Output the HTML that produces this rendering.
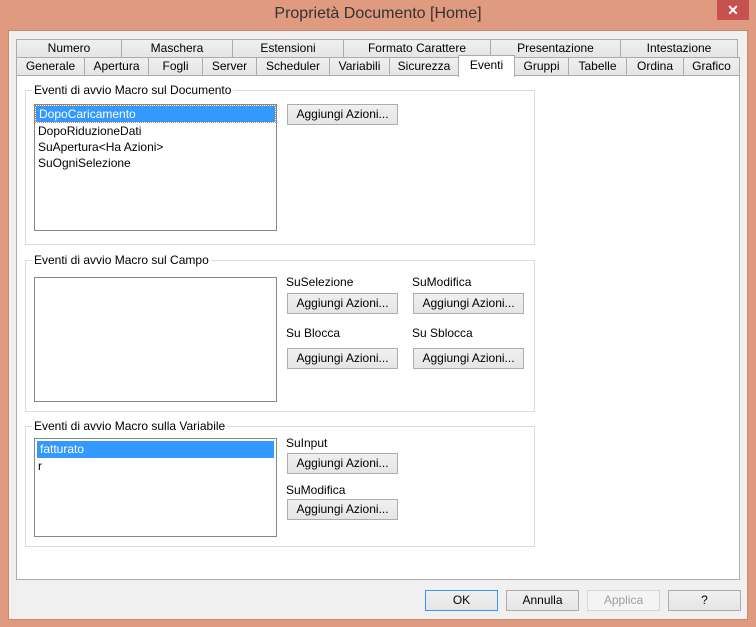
<!DOCTYPE html>
<html><head><meta charset="utf-8"><style>
*{box-sizing:border-box;margin:0;padding:0}
body{width:756px;height:627px;background:#df9a7f;font-family:"Liberation Sans",sans-serif;font-size:12px;color:#000;position:relative;overflow:hidden}
.a{position:absolute;white-space:nowrap}
.title{left:0;width:756px;top:5px;text-align:center;font-size:16px;color:#333}
.close{left:717px;top:0;width:32px;height:20px;background:#c75050;color:#fff;text-align:center;font-size:14px;line-height:20px;font-weight:bold}
.client{left:8px;top:30px;width:740px;height:590px;background:#f0f0f0;border:1px solid #c48a73}
.tab{position:absolute;height:19px;border:1px solid #acacac;background:linear-gradient(#f0f0f0,#e5e5e5);text-align:center;line-height:17px;font-size:12px}
.pane{left:16px;top:75px;width:724px;height:505px;background:#fff;border:1px solid #adadad}
.grp{position:absolute;border:1px solid #dcdcdc}
.gt{position:absolute;background:#fff;padding:0 2px;top:-8px;left:6px;line-height:14px}
.list{position:absolute;border:1px solid #828790;background:#fff}
.sel{background:#3399ff;color:#fff}
.btn{position:absolute;width:111px;height:21px;border:1px solid #adadad;background:linear-gradient(#f0f0f0,#e5e5e5);text-align:center;line-height:19px}
.li{height:16px;line-height:16px;padding-left:3px}
</style></head><body>
<div class="a title">Proprietà Documento [Home]</div>
<div class="a close">✕</div>
<div class="a client"></div>
<div class="a pane"></div>
<!-- top tab row -->
<div class="tab" style="left:16px;top:39px;width:106px">Numero</div>
<div class="tab" style="left:121px;top:39px;width:112px">Maschera</div>
<div class="tab" style="left:232px;top:39px;width:112px">Estensioni</div>
<div class="tab" style="left:343px;top:39px;width:148px">Formato Carattere</div>
<div class="tab" style="left:490px;top:39px;width:131px">Presentazione</div>
<div class="tab" style="left:620px;top:39px;width:118px">Intestazione</div>
<!-- bottom row -->
<div class="tab" style="left:16px;top:57px;width:69px">Generale</div>
<div class="tab" style="left:84px;top:57px;width:65px">Apertura</div>
<div class="tab" style="left:148px;top:57px;width:55px">Fogli</div>
<div class="tab" style="left:202px;top:57px;width:55px">Server</div>
<div class="tab" style="left:256px;top:57px;width:74px">Scheduler</div>
<div class="tab" style="left:329px;top:57px;width:61px">Variabili</div>
<div class="tab" style="left:389px;top:57px;width:70px">Sicurezza</div>
<div class="tab" style="left:514px;top:57px;width:55px">Gruppi</div>
<div class="tab" style="left:568px;top:57px;width:59px">Tabelle</div>
<div class="tab" style="left:626px;top:57px;width:58px">Ordina</div>
<div class="tab" style="left:683px;top:57px;width:57px">Grafico</div>
<div class="tab" style="left:458px;top:55px;width:57px;height:22px;background:#fff;border-bottom:none;line-height:18px">Eventi</div>

<div class="grp" style="left:25px;top:90px;width:510px;height:155px"><span class="gt">Eventi di avvio Macro sul Documento</span></div>
<div class="list" style="left:34px;top:104px;width:243px;height:127px">
<div class="li sel" style="margin:1px;outline:1px dotted #d08040">DopoCaricamento</div>
<div class="li">DopoRiduzioneDati</div>
<div class="li">SuApertura&lt;Ha Azioni&gt;</div>
<div class="li">SuOgniSelezione</div>
</div>
<div class="btn" style="left:287px;top:104px">Aggiungi Azioni...</div>

<div class="grp" style="left:25px;top:260px;width:510px;height:152px"><span class="gt">Eventi di avvio Macro sul Campo</span></div>
<div class="list" style="left:34px;top:277px;width:243px;height:125px"></div>
<div class="a" style="left:286px;top:275px">SuSelezione</div>
<div class="a" style="left:412px;top:275px">SuModifica</div>
<div class="btn" style="left:287px;top:293px">Aggiungi Azioni...</div>
<div class="btn" style="left:413px;top:293px">Aggiungi Azioni...</div>
<div class="a" style="left:286px;top:326px">Su Blocca</div>
<div class="a" style="left:412px;top:326px">Su Sblocca</div>
<div class="btn" style="left:287px;top:348px">Aggiungi Azioni...</div>
<div class="btn" style="left:413px;top:348px">Aggiungi Azioni...</div>

<div class="grp" style="left:25px;top:426px;width:510px;height:121px"><span class="gt">Eventi di avvio Macro sulla Variabile</span></div>
<div class="list" style="left:34px;top:438px;width:243px;height:99px">
<div class="li sel" style="margin:2px 2px 0 2px;height:17px">fatturato</div>
<div class="li">r</div>
</div>
<div class="a" style="left:286px;top:436px">SuInput</div>
<div class="btn" style="left:287px;top:453px">Aggiungi Azioni...</div>
<div class="a" style="left:286px;top:483px">SuModifica</div>
<div class="btn" style="left:287px;top:499px">Aggiungi Azioni...</div>

<div class="btn" style="left:425px;top:590px;width:73px;border-color:#3399ff">OK</div>
<div class="btn" style="left:506px;top:590px;width:73px">Annulla</div>
<div class="btn" style="left:587px;top:590px;width:73px;color:#a0a0a0;border-color:#d5d5d5;background:#f4f4f4">Applica</div>
<div class="btn" style="left:668px;top:590px;width:73px">?</div>
</body></html>
